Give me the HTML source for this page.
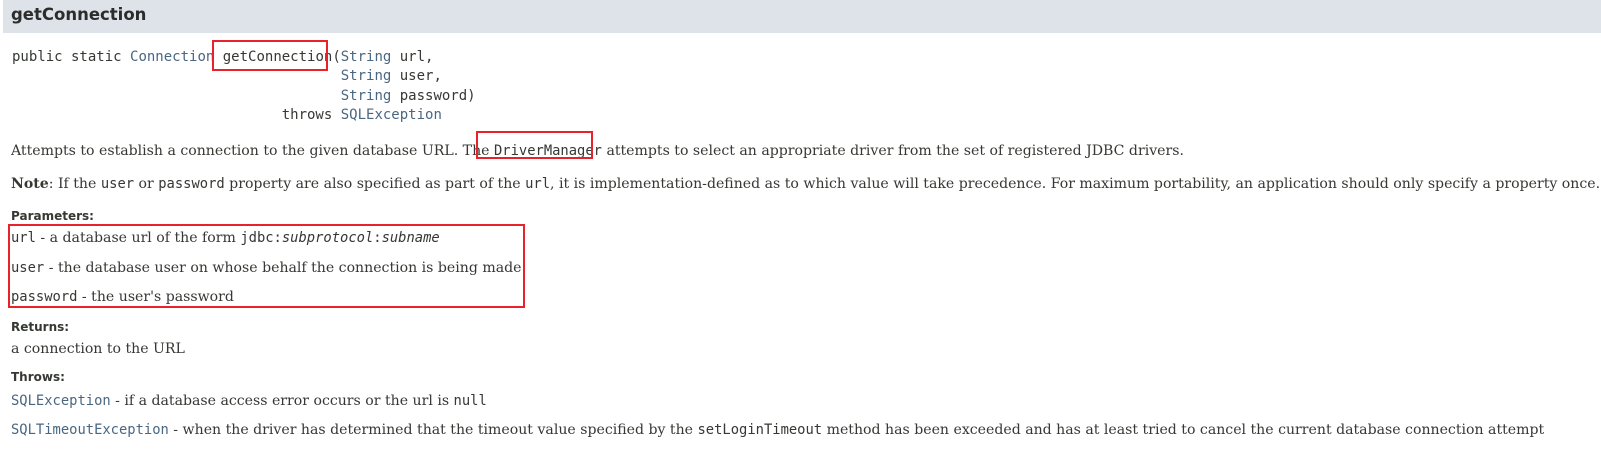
<!DOCTYPE html>
<html><head><meta charset="utf-8"><style>
body{margin:0;width:1601px;height:449px;background:#fff;position:relative;overflow:hidden;color:#353833}
div{position:absolute;white-space:nowrap}
pre{margin:0}
.h{left:3px;top:0;width:1598px;height:33px;background:#dee3e9}
.t{left:11px;top:5px;font:bold 16.5px "DejaVu Sans",sans-serif;color:#2c2c2c}
.m{font-family:"DejaVu Sans Mono","Liberation Mono",monospace;font-size:14px;line-height:19.4px}
.s{font-family:"DejaVu Serif","Liberation Serif",serif;font-size:14.1px}
.b{font:bold 12px "DejaVu Sans",sans-serif;color:#353833}
.l{color:#4a6782}
.r{border:2px solid #e8222a;box-sizing:border-box}
code{font-family:"DejaVu Sans Mono","Liberation Mono",monospace;font-size:13.8px}
</style></head><body>
<div class="h"></div>
<div class="t">getConnection</div>
<pre class="m" style="position:absolute;left:12px;top:48px">public static <span class="l">Connection</span> getConnection(<span class="l">String</span> url,
                                       <span class="l">String</span> user,
                                       <span class="l">String</span> password)
                                throws <span class="l">SQLException</span></pre>
<div class="r" style="left:212px;top:40px;width:116px;height:31px"></div>
<div class="s" style="left:11px;top:143px">Attempts to establish a connection to the given database URL. The <code>DriverManager</code> attempts to select an appropriate driver from the set of registered JDBC drivers.</div>
<div class="r" style="left:476px;top:131px;width:117px;height:28px"></div>
<div class="s" style="left:11px;top:176px"><b>Note</b>: If the <code>user</code> or <code>password</code> property are also specified as part of the <code>url</code>, it is implementation-defined as to which value will take precedence. For maximum portability, an application should only specify a property once.</div>
<div class="b" style="left:11px;top:209px">Parameters:</div>
<div class="s" style="left:11px;top:230px"><code>url</code> - a database url of the form <code>jdbc:<i>subprotocol</i>:<i>subname</i></code></div>
<div class="s" style="left:11px;top:260px"><code>user</code> - the database user on whose behalf the connection is being made</div>
<div class="s" style="left:11px;top:289px"><code>password</code> - the user's password</div>
<div class="r" style="left:8px;top:224px;width:517px;height:84px"></div>
<div class="b" style="left:11px;top:320px">Returns:</div>
<div class="s" style="left:11px;top:341px">a connection to the URL</div>
<div class="b" style="left:11px;top:370px">Throws:</div>
<div class="s" style="left:11px;top:393px"><code class="l">SQLException</code> - if a database access error occurs or the url is <code>null</code></div>
<div class="s" style="left:11px;top:422px"><code class="l">SQLTimeoutException</code> - when the driver has determined that the timeout value specified by the <code>setLoginTimeout</code> method has been exceeded and has at least tried to cancel the current database connection attempt</div>
</body></html>
